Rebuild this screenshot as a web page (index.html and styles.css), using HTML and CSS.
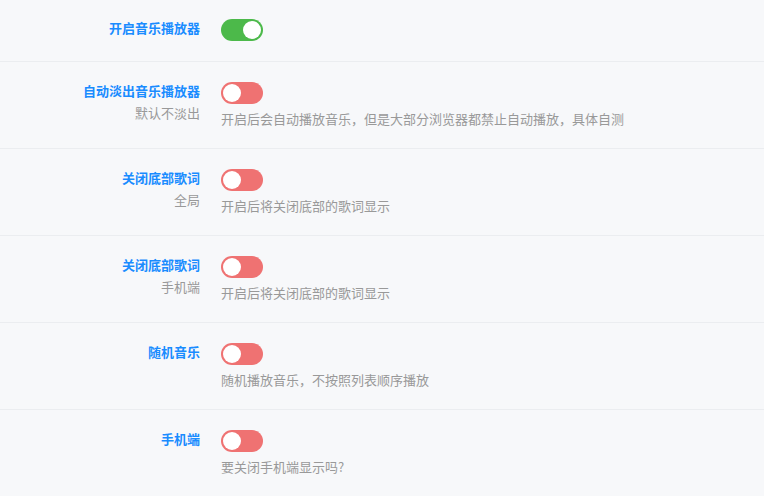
FILE: index.html
```html
<!DOCTYPE html>
<html lang="zh-CN">
<head>
  <meta charset="UTF-8">
  <meta name="viewport" content="width=device-width, initial-scale=1.0">
  <title>音乐设置</title>
  <link rel="stylesheet" href="styles.css">
</head>
<body>
  <div class="settings">
    <div class="row first">
      <div class="label">
        <div class="title">开启音乐播放器</div>
      </div>
      <div class="control">
        <label class="switch on"><input type="checkbox" checked><span class="knob"></span></label>
      </div>
    </div>

    <div class="row">
      <div class="label">
        <div class="title">自动淡出音乐播放器</div>
        <div class="sub">默认不淡出</div>
      </div>
      <div class="control">
        <label class="switch"><input type="checkbox"><span class="knob"></span></label>
        <p class="desc">开启后会自动播放音乐，但是大部分浏览器都禁止自动播放，具体自测</p>
      </div>
    </div>

    <div class="row">
      <div class="label">
        <div class="title">关闭底部歌词</div>
        <div class="sub">全局</div>
      </div>
      <div class="control">
        <label class="switch"><input type="checkbox"><span class="knob"></span></label>
        <p class="desc">开启后将关闭底部的歌词显示</p>
      </div>
    </div>

    <div class="row">
      <div class="label">
        <div class="title">关闭底部歌词</div>
        <div class="sub">手机端</div>
      </div>
      <div class="control">
        <label class="switch"><input type="checkbox"><span class="knob"></span></label>
        <p class="desc">开启后将关闭底部的歌词显示</p>
      </div>
    </div>

    <div class="row">
      <div class="label">
        <div class="title">随机音乐</div>
      </div>
      <div class="control">
        <label class="switch"><input type="checkbox"><span class="knob"></span></label>
        <p class="desc">随机播放音乐，不按照列表顺序播放</p>
      </div>
    </div>

    <div class="row">
      <div class="label">
        <div class="title">手机端</div>
      </div>
      <div class="control">
        <label class="switch"><input type="checkbox"><span class="knob"></span></label>
        <p class="desc">要关闭手机端显示吗?</p>
      </div>
    </div>
  </div>
</body>
</html>
```

FILE: styles.css
```css
* {
  box-sizing: border-box;
  margin: 0;
  padding: 0;
}

body {
  background-color: #f7f8fa;
  font-family: "Noto Sans CJK SC", "Noto Sans", sans-serif;
  font-size: 13px;
  color: #999;
  overflow: hidden;
}

.row {
  display: flex;
  padding: 20px 0 20px;
  border-bottom: 1px solid #ebedf0;
}

.row.first {
  padding-top: 19px;
  padding-bottom: 20px;
}

.label {
  width: 200px;
  text-align: right;
}

.title {
  color: #1a8cff;
  font-weight: bold;
  line-height: 18px;
}

.sub {
  margin-top: 4px;
  line-height: 18px;
  color: #999;
}

.control {
  margin-left: 21px;
}

.switch {
  display: block;
  position: relative;
  width: 42px;
  height: 22px;
  border-radius: 11px;
  background-color: #ef7272;
  cursor: pointer;
}

.switch.on {
  background-color: #4cb94a;
}

.switch input {
  display: none;
}

.knob {
  position: absolute;
  top: 2px;
  left: 2px;
  width: 18px;
  height: 18px;
  border-radius: 50%;
  background-color: #fff;
}

.switch.on .knob {
  left: 22px;
}

.desc {
  margin-top: 6px;
  line-height: 18px;
  color: #999;
}
```
